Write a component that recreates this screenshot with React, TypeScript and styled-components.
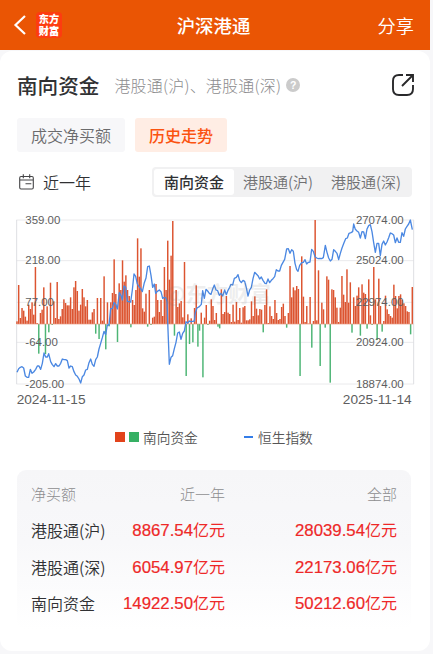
import React from "react";
import styled, { createGlobalStyle } from "styled-components";

const Global = createGlobalStyle`
  * { box-sizing: border-box; }
  body {
    margin: 0;
    background: #f7f7f9;
    font-family: "Noto Sans CJK SC", sans-serif;
    color: #303133;
  }
`;

const Page = styled.div`
  width: 430px;
  height: 654px;
  display: flex;
  flex-direction: column;
  overflow: hidden;
`;

const TopBar = styled.header`
  height: 50px;
  flex: none;
  display: grid;
  grid-template-columns: 1fr auto 1fr;
  align-items: center;
  padding: 0 16px 0 13px;
  background: #ea5504;
  color: #fff;
`;

const TopLeft = styled.div`
  display: flex;
  align-items: center;
  gap: 9px;
`;

const Logo = styled.div`
  width: 26px;
  height: 26px;
  border-radius: 4px;
  background: #fd3c10;
  font: 900 10.2px/12px "Noto Sans CJK SC", sans-serif;
  padding-top: 1px;
  text-align: center;
`;

const Title = styled.h1`
  margin: 0;
  font-size: 18.4px;
  font-weight: 500;
  line-height: 26px;
`;

const Share = styled.span`
  justify-self: end;
  font-size: 18.2px;
  font-weight: 350;
  line-height: 26px;
`;

const Card = styled.main`
  height: 600px;
  margin-top: 1px;
  border-radius: 12px;
  background: #fff;
  display: flex;
  flex-direction: column;
`;

const Heading = styled.div`
  display: flex;
  align-items: center;
  height: 30px;
  margin: 19px 16px 0 17px;
`;

const Name = styled.h2`
  margin: 0 15px 0 0;
  font-size: 20.6px;
  font-weight: 500;
  line-height: 30px;
`;

const Scope = styled.span`
  font-size: 16px;
  letter-spacing: 0.2px;
  font-weight: 300;
  line-height: 24px;
  margin-top: -1px;
  color: #8c8c8e;
  white-space: nowrap;
`;

const Help = styled.span`
  width: 14px;
  height: 14px;
  margin-left: 5px;
  border-radius: 50%;
  background: #cbcbcb;
  color: #fff;
  font: 700 10.5px/14px "Liberation Sans", sans-serif;
  text-align: center;
`;

const OpenIcon = styled.svg`
  margin-left: auto;
  width: 22px;
  height: 22px;
`;

const Tabs = styled.div`
  display: flex;
  gap: 10px;
  margin: 18px 0 0 17px;
`;

const Tab = styled.button<{ $active?: boolean }>`
  height: 34px;
  width: ${(p) => (p.$active ? 92 : 108)}px;
  padding: 0;
  border: 0;
  border-radius: 3px;
  font: ${(p) => (p.$active ? 500 : 350)} 16px/33px "Noto Sans CJK SC", sans-serif;
  color: ${(p) => (p.$active ? "#fb5310" : "#6b6b6d")};
  background: ${(p) => (p.$active ? "#ffede4" : "#f7f7f9")};
`;

const Filters = styled.div`
  display: flex;
  align-items: center;
  height: 30px;
  margin: 15px 18px 0 19px;
`;

const Period = styled.span`
  margin: -1px 0 0 9px;
  font-size: 16px;
  font-weight: 350;
  line-height: 24px;
`;

const Segments = styled.div`
  display: flex;
  width: 260px;
  height: 30px;
  margin-left: auto;
  padding: 2px;
  border-radius: 4px;
  background: #f1f1f2;
`;

const Segment = styled.button<{ $active?: boolean }>`
  width: ${(p) => (p.$active ? 80 : 88)}px;
  padding: 0;
  border: 0;
  border-radius: 3px;
  font: ${(p) => (p.$active ? 500 : 350)} 15px/26px "Noto Sans CJK SC", sans-serif;
  color: ${(p) => (p.$active ? "#303133" : "#707072")};
  background: ${(p) => (p.$active ? "#fff" : "transparent")};
`;

const Chart = styled.svg`
  display: block;
  flex: none;
  width: 430px;
  height: 200px;
  margin-top: 13px;
  font-family: "Liberation Sans", sans-serif;
  fill: #5e5e60;
`;

const Legend = styled.div`
  display: flex;
  align-items: center;
  height: 20px;
  margin: 17px 0 0 115px;
  font-size: 13.7px;
  font-weight: 350;
  line-height: 20px;
  color: #555;
`;

const Swatch = styled.i<{ $color: string; $line?: boolean }>`
  width: ${(p) => (p.$line ? 9 : 10)}px;
  height: ${(p) => (p.$line ? 2 : 10)}px;
  margin-right: ${(p) => (p.$line ? 5 : 4)}px;
  background: ${(p) => p.$color};
`;

const LegendText = styled.span`
  width: 101px;
`;

const Table = styled.section`
  display: grid;
  grid-template-columns: 84px 110px 1fr;
  grid-template-rows: 32px 39px 35px 37px;
  align-items: center;
  margin: 23px 19px 0 17px;
  height: 160px;
  padding: 8px 14px 0;
  border-radius: 9px;
  background: linear-gradient(#f6f6f8 0%, #f8f8fa 45%, #fff 100%);
  white-space: nowrap;
`;

const HeadCell = styled.span<{ $end?: boolean }>`
  font-size: 15px;
  font-weight: 300;
  line-height: 22px;
  color: #8d8d8f;
  text-align: ${(p) => (p.$end ? "right" : "left")};
`;

const RowName = styled.span`
  font-size: 16px;
  font-weight: 350;
  line-height: 24px;
`;

const Amount = styled.span`
  font: 16.8px/24px "Liberation Sans", sans-serif;
  color: #ee2828;
  -webkit-text-stroke: 0.2px #ee2828;
  text-align: right;
`;

const Unit = styled.span`
  font: 400 16px/24px "Noto Sans CJK SC", sans-serif;
  -webkit-text-stroke: 0;
`;

// Bar ends on the chart's vertical scale; values above ZERO are inflows, below it outflows.
const ZERO = 342;
const STEP = 5.025;
const bars = [
  334, 225, 324, 294, 302, 320, 332, 284, 297, 277, 314, 171, 339, 431, 309, 299, 232, 432, 289, 367,
  218, 345, 274, 324, 216, 327, 319, 297, 268, 279, 286, 286, 262, 297, 232, 213, 243, 302, 284, 237,
  262, 289, 270, 329, 329, 307, 297, 371, 264, 387, 264, 332, 199, 418, 277, 349, 277, 249, 148, 252,
  396, 220, 240, 151, 215, 196, 240, 258, 352, 270, 285, 240, 85, 200, 115, 295, 305, 251, 350, 240,
  345, 323, 320, 222, 270, 306, 270, 318, 171, 240, 92, 209, 137, 33, 377, 240, 291, 280, 273, 322,
  156, 498, 313, 402, 325, 397, 294, 226, 410, 362, 308, 502, 323, 285, 345, 332, 268, 288, 330, 309,
  350, 355, 238, 312, 306, 258, 308, 312, 336, 284, 335, 276, 330, 294, 338, 292, 288, 331, 331, 328,
  274, 318, 259, 296, 316, 297, 299, 367, 285, 238, 339, 289, 318, 327, 270, 309, 330, 327, 291, 281,
  318, 353, 309, 168, 262, 232, 241, 228, 237, 498, 139, 260, 336, 288, 341, 261, 413, 333, 30, 331,
  181, 468, 278, 298, 353, 199, 209, 518, 238, 240, 262, 293, 336, 293, 198, 254, 276, 178, 278, 217,
  368, 262, 288, 257, 232, 377, 223, 248, 252, 356, 208, 316, 345, 171, 268, 390, 206, 288, 365, 333,
  257, 298, 312, 318, 323, 224, 258, 295, 258, 253, 270, 280, 288, 304, 306, 373, 231,
];

const indexLine = `51,487 56,476 61,472 66,470 71,474 76,498 81,502 86,502 91,478 96,490 101,486 107,478 112,468 117,468
122,478 127,460 132,429 137,441 142,441 146,431 152,455 157,464 162,470 167,461 172,468 177,468 182,460 187,447 192,449
197,449 202,452 207,474 212,468 217,470 222,485 227,495 232,499 237,507 242,519 247,500 252,495 257,480 262,478 267,458
272,447 277,463 282,469 287,449 292,441 297,417 302,400 307,383 312,364 317,374 322,345 327,345 332,296 337,296 342,277
347,283 352,297 358,248 363,257 367,270 372,228 377,232 382,274 392,276 397,240 402,192 407,199 412,222 417,230 422,236
427,245 433,218 438,204 443,170 448,168 453,196 458,232 463,222 467,250 472,244 478,240 483,245 488,265 493,262 498,264
501,275 504,360 508,463 513,442 518,437 523,416 528,397 533,369 538,366 543,388 548,370 553,363 558,335 563,339
568,333 573,335 578,334 583,333 586,308 591,294 598,290 604,283 608,242 613,265 618,238 623,243 628,250 633,253 638,237
643,225 648,240 653,242 658,256 663,250 668,258 674,240 679,254 684,241 689,232 693,223 698,225 703,205 709,202 714,194
719,212 724,218 729,211 734,214 739,233 744,258 749,240 754,232 759,206 764,187 769,192 774,197 779,207 784,201 789,211
795,220 799,221 804,207 809,218 814,211 819,206 824,200 829,179 834,183 839,183 844,166 849,157 854,148 860,117 865,116
870,130 875,119 880,124 885,160 890,179 894,184 899,166 905,158 910,157 915,149 920,162 925,157 930,156 935,118 940,124
945,140 950,144 955,146 960,145 965,146 970,143 976,106 981,127 986,144 991,153 996,148 1001,119 1006,124 1011,130
1016,149 1021,130 1026,114 1032,98 1037,86 1042,84 1047,70 1053,68 1058,65 1061,42 1066,58 1071,63 1076,67 1081,84
1086,65 1091,66 1096,86 1101,57 1106,47 1111,44 1116,65 1121,98 1126,127 1131,100 1136,100 1141,137 1146,103 1151,93
1156,105 1161,96 1166,83 1171,69 1176,71 1181,75 1186,98 1191,84 1196,97 1201,97 1206,68 1211,79 1216,57 1221,49
1226,42 1231,30 1237,59`;

const grid = [30, 152, 277, 397, 522];
const leftLabels = ["359.00", "218.00", "77.00", "-64.00", "-205.00"];
const rightLabels = ["27074.00", "25024.00", "22974.00", "20924.00", "18874.00"];

const rows = [
  ["港股通(沪)", "8867.54", "28039.54"],
  ["港股通(深)", "6054.97", "22173.06"],
  ["南向资金", "14922.50", "50212.60"],
];

function FlowChart() {
  return (
    <Chart viewBox="0 0 1290 600">
      {grid.map((y) => (
        <line key={y} x1="49" x2="1242" y1={y} y2={y} stroke="#eaeaec" strokeWidth="3" />
      ))}
      <path d="M50 30V522M1241 30V522" stroke="#dedfe3" strokeWidth="3" />
      {bars.map((y, i) => (
        <rect
          key={i}
          x={48.8 + i * STEP}
          width="4.4"
          y={Math.min(y, ZERO)}
          height={Math.abs(y - ZERO)}
          fill={y < ZERO ? "#dc5430" : "#4db575"}
        />
      ))}
      <path d="M50 342H1240" stroke="#e9977f" strokeWidth="2" />
      <polyline points={indexLine} fill="none" stroke="#4b88e2" strokeWidth="4" strokeLinejoin="round" />
      <text x="492" y="275" fontSize="64" fontWeight="700" fill="#777" opacity="0.12" fontFamily="Noto Sans CJK SC">
        @东方财富
      </text>
      {leftLabels.map((t, i) => (
        <text key={t} x="76" y={grid[i] + 11} fontSize="34.4">{t}</text>
      ))}
      {rightLabels.map((t, i) => (
        <text key={t} x="1211" y={grid[i] + 11} fontSize="34.4" textAnchor="end">{t}</text>
      ))}
      <text x="50" y="583" fontSize="41">2024-11-15</text>
      <text x="1235" y="583" fontSize="41" textAnchor="end">2025-11-14</text>
    </Chart>
  );
}

export default function App() {
  return (
    <>
      <Global />
      <Page>
        <TopBar>
          <TopLeft>
            <svg width="14" height="22" viewBox="0 0 14 22" fill="none" stroke="#fff" strokeWidth="2.2">
              <path d="M12 2L2.5 11L12 20" />
            </svg>
            <Logo>东方<br />财富</Logo>
          </TopLeft>
          <Title>沪深港通</Title>
          <Share>分享</Share>
        </TopBar>
        <Card>
          <Heading>
            <Name>南向资金</Name>
            <Scope>港股通(沪)、港股通(深)</Scope>
            <Help>?</Help>
            <OpenIcon viewBox="0 0 22 22" fill="none" stroke="#29292b" strokeWidth="1.9">
              <path d="M11 1H7Q1 1 1 7V15Q1 21 7 21H15Q21 21 21 15V11M10 12L20.5 1.5M14 1H21V8" />
            </OpenIcon>
          </Heading>
          <Tabs>
            <Tab>成交净买额</Tab>
            <Tab $active>历史走势</Tab>
          </Tabs>
          <Filters>
            <svg width="15" height="16" viewBox="0 0 15 16" fill="none" stroke="#444446" strokeWidth="1.1">
              <path d="M2 2.5H13Q14.3 2.5 14.3 4V13.5Q14.3 15 13 15H2Q.7 15 .7 13.5V4Q.7 2.5 2 2.5ZM.7 6H14.3M4.3 .3V4.2M10.7 .3V4.2M6.5 9.8H12.3" />
            </svg>
            <Period>近一年</Period>
            <Segments>
              <Segment $active>南向资金</Segment>
              <Segment>港股通(沪)</Segment>
              <Segment>港股通(深)</Segment>
            </Segments>
          </Filters>
          <FlowChart />
          <Legend>
            <Swatch $color="#e2431b" />
            <Swatch $color="#36b064" />
            <LegendText>南向资金</LegendText>
            <Swatch $color="#347de8" $line />
            <span>恒生指数</span>
          </Legend>
          <Table>
            <HeadCell>净买额</HeadCell>
            <HeadCell $end>近一年</HeadCell>
            <HeadCell $end>全部</HeadCell>
            {rows.map(([name, year, total]) => (
              <React.Fragment key={name}>
                <RowName>{name}</RowName>
                <Amount>{year}<Unit>亿元</Unit></Amount>
                <Amount>{total}<Unit>亿元</Unit></Amount>
              </React.Fragment>
            ))}
          </Table>
        </Card>
      </Page>
    </>
  );
}
